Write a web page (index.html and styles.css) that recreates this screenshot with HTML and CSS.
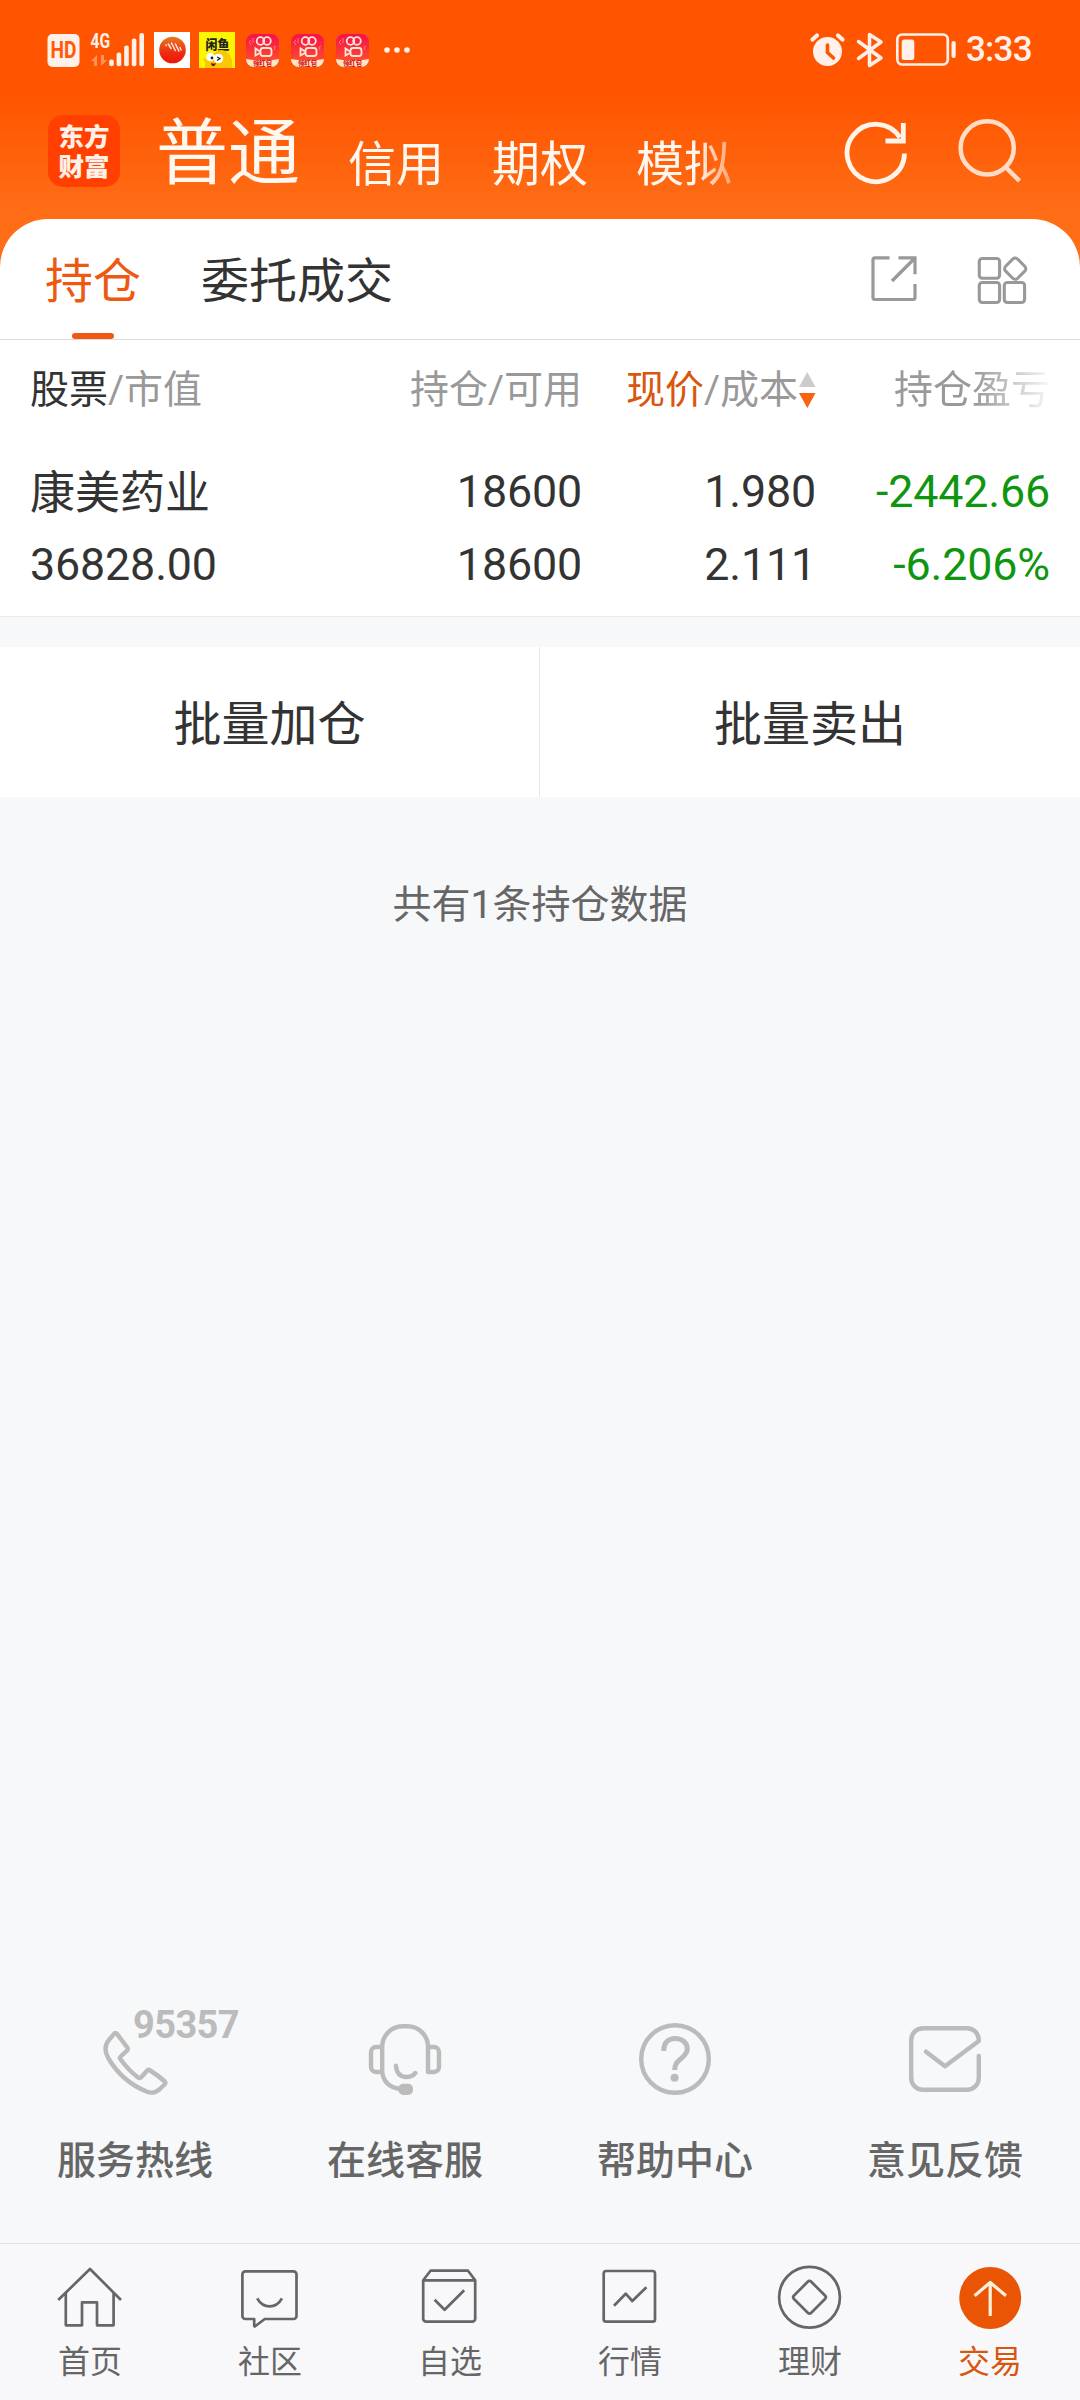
FILE: index.html
```html
<!DOCTYPE html>
<html lang="zh-CN">
<head>
<meta charset="utf-8">
<title>持仓</title>
<link rel="stylesheet" href="styles.css">
</head>
<body>
<div class="app">
  <header class="top">
    <div class="status">
      <div class="status-left">
        <svg class="sig" width="100" height="40" viewBox="46 30 100 40" fill="#fff1e9">
          <rect x="47.5" y="34" width="32" height="33" rx="5"/>
          <text class="hd" x="50.5" y="58.3" textLength="26" lengthAdjust="spacingAndGlyphs">HD</text>
          <text class="net" x="90.5" y="48" textLength="19.5" lengthAdjust="spacingAndGlyphs">4G</text>
          <g opacity=".4"><path d="M91 61l6-6v11h-3v-5zM101 55v11l6-6h-3v-5z"/></g>
          <rect x="109.2" y="59.5" width="4.6" height="6.8" rx="2"/>
          <rect x="116.6" y="52.5" width="4.6" height="13.8" rx="2"/>
          <rect x="124.2" y="45.5" width="4.6" height="20.8" rx="2"/>
          <rect x="131.8" y="38.5" width="4.6" height="27.8" rx="2"/>
          <rect x="139.4" y="33" width="4.6" height="33.3" rx="2"/>
        </svg>
        <svg class="app-a" width="36" height="36" viewBox="0 0 36 36">
          <defs><linearGradient id="ball" x1="0" y1="0" x2="0" y2="1"><stop offset="0" stop-color="#e87b20"/><stop offset=".6" stop-color="#ee2c10"/><stop offset="1" stop-color="#f01408"/></linearGradient></defs>
          <rect width="36" height="36" fill="#fff"/><circle cx="18.5" cy="18" r="13.3" fill="url(#ball)"/>
          <path d="M12 13l.3 .5M14.300 12l2.700 4.500M17.500 11l3.800 7.500M21.500 12l3.300 7M26 15.500l1 2.500" stroke="#ffe3dc" stroke-width="1.500" stroke-linecap="round"/>
        </svg>
        <svg class="app-b" width="36" height="36" viewBox="0 0 36 36">
          <rect width="36" height="36" fill="#fcf500"/>
          <text class="fish" x="6.500" y="16.500" textLength="24" lengthAdjust="spacingAndGlyphs">闲鱼</text>
          <path d="M6 36v-6l-2-3 2-1 2 3c0-5 4-9 8-8 3-4 9-4 13 0 4 4 5 10 4 15z" fill="#f9c800"/>
          <circle cx="11.500" cy="25" r="4.200" fill="#fff"/><circle cx="19.500" cy="26.500" r="4.800" fill="#fff"/>
          <circle cx="13" cy="26" r="1.400" fill="#222"/><path d="M18 25l3 1.500-3 2" stroke="#222" stroke-width="1.300" fill="none"/><path d="M12 31q3 1 5 0-1 4-3 3-2 0-2-3z" fill="#7a1500"/>
        </svg>
        <svg class="ks" width="33" height="33" viewBox="0 0 33 33">
          <defs>
            <linearGradient id="ksbg" x1="0" y1="0" x2="0" y2="1"><stop offset="0" stop-color="#f7104c"/><stop offset="1" stop-color="#ff5a22"/></linearGradient>
            <clipPath id="ksclip"><rect width="33" height="33" rx="8"/></clipPath>
            <g id="kuaishou" clip-path="url(#ksclip)">
              <rect width="33" height="33" fill="url(#ksbg)"/>
              <g fill="none" stroke="#ffe6da" stroke-width="1.800"><circle cx="14.500" cy="7" r="3.800"/><circle cx="21" cy="7" r="3.800"/><rect x="14.500" y="14" width="11" height="8" rx="2.500"/><path d="M14 17.500l-4.500-3v7l4.500-2.500"/></g>
              <g fill="none" stroke="#ff7a70" stroke-width="1"><path d="M5 6l-2 2 2 3M7 4v5M30 12l-2 1 1 3"/></g>
              <path d="M0 25q16.500 3 33 0v8H0z" fill="#ffe5c9"/>
              <text class="red" x="7" y="32" textLength="19" lengthAdjust="spacingAndGlyphs">领红包</text>
            </g>
          </defs>
          <use href="#kuaishou"/>
        </svg>
        <svg class="ks" width="33" height="33" viewBox="0 0 33 33"><use href="#kuaishou"/></svg>
        <svg class="ks" width="33" height="33" viewBox="0 0 33 33"><use href="#kuaishou"/></svg>
        <svg class="more" width="28" height="8" viewBox="0 0 28 8" fill="#fff1e9"><circle cx="4" cy="4" r="2.800"/><circle cx="14" cy="4" r="2.800"/><circle cx="24" cy="4" r="2.800"/></svg>
      </div>
      <div class="status-right">
        <svg width="150" height="40" viewBox="808 30 150 40" fill="none" stroke="#fff1e9">
          <circle cx="827.500" cy="51.500" r="14.500" fill="#fff1e9" stroke="none"/>
          <path d="M827.500 45v7.500l6 5.500" stroke="#ff5500" stroke-width="3.600" stroke-linecap="round" stroke-linejoin="round"/>
          <path d="M812.500 39.500l4.500-4M842.500 39.500l-4.500-4" stroke-width="4.200" stroke-linecap="round"/>
          <path d="M858.500 41.500l22.500 16.500-11.500 7.500v-31l11.500 7.500-22.500 16.500" stroke-width="3.500" stroke-linecap="round" stroke-linejoin="round"/>
          <rect x="897.300" y="34.500" width="50.500" height="30" rx="5" stroke-width="2.700"/>
          <rect x="901.700" y="39.500" width="12.600" height="20.500" rx="2.500" fill="#fff1e9" stroke="none"/>
          <rect x="951.500" y="41" width="4.200" height="17" rx="2" fill="#fff1e9" stroke="none"/>
        </svg>
        <span class="clock">3:33</span>
      </div>
    </div>
    <div class="head">
      <div class="logo">东方<br>财富</div>
      <nav class="accounts"><span class="on">普通</span><span>信用</span><span>期权</span><span>模拟</span></nav>
      <svg class="refresh" width="64" height="66" viewBox="844 119 64 66" fill="none" stroke="#fff3ea" stroke-width="4.800"><path d="M904.500 153.500A28.700 28.700 0 1 1 900 137.500"/><path d="M885.500 141H903.300V123"/></svg>
      <svg class="search" width="66" height="66" viewBox="956 117 66 66" fill="none" stroke="#ffdcc6" stroke-width="4.500"><circle cx="987.200" cy="147.900" r="26.600"/><path d="M1005.500 167l14 14"/></svg>
    </div>
  </header>

  <main class="card">
    <div class="tabs">
      <span class="tab active">持仓</span><span class="tab">委托成交</span>
      <svg class="t1" width="48" height="48" viewBox="870 255 48 48" fill="none" stroke="#999" stroke-width="3.200"><path d="M889.500 257.800H875a2 2 0 0 0-2 2v37.700a2 2 0 0 0 2 2h38a2 2 0 0 0 2-2V284"/><path d="M898.500 257.800H915v16.500M914.500 258.500l-22.500 22.500"/></svg>
      <svg class="t2" width="52" height="52" viewBox="976 255 52 52" fill="none" stroke="#999" stroke-width="3.100"><rect x="979.300" y="258.500" width="20.300" height="19.800" rx="3"/><rect x="979.300" y="282.500" width="20.300" height="20" rx="3"/><rect x="1004.300" y="282.500" width="20.300" height="20" rx="3"/><rect x="1006.700" y="260.200" width="17" height="17" rx="3.500" transform="rotate(45 1015.200 268.700)"/></svg>
    </div>
    <div class="grid labels">
      <span><b>股票</b>/市值</span>
      <span>持仓/可用</span>
      <span class="sorted"><em>现价</em>/成本<svg width="17" height="36" viewBox="0 0 17 36"><path d="M8.300 0L16.500 15H0z" fill="#ccc"/><path d="M8.300 36L16.500 21H0z" fill="#f9620f"/></svg></span>
      <span class="fade">持仓盈亏</span>
    </div>
    <div class="grid row first"><span class="name">康美药业</span><span>18600</span><span>1.980</span><span class="down">-2442.66</span></div>
    <div class="grid row second"><span>36828.00</span><span>18600</span><span>2.111</span><span class="down">-6.206%</span></div>
  </main>

  <div class="actions"><div>批量加仓</div><div>批量卖出</div></div>
  <p class="count">共有1条持仓数据</p>

  <section class="services">
    <div class="service">
      <svg width="72" height="72" viewBox="0 0 72 72"><path d="M14.800 11.200q1.700-2.500 3.400 0L28.300 24.500q1.200 1.700-.3 3.200l-6.300 5.800q-1.400 1.300-.2 2.700 8 11 17.500 18.200 1.800 1.500 3.200-.2l5.800-6.500q1.400-1.600 3.200-.2 7.500 4.600 14.600 11 1.400 1.300 0 2.700l-5.500 5.300q-5.600 4.800-12.200 2.200Q23.500 59 9.500 35.500 3.500 25.500 9.500 17.500z"/></svg>
      <i class="hotline">95357</i><span>服务热线</span>
    </div>
    <div class="service">
      <svg width="72" height="72" viewBox="0 0 72 72"><path d="M13.200 48V24A20.500 20.500 0 0 1 33.500 3.300h5A20.500 20.500 0 0 1 59 24v25h6a5 5 0 0 0 5-5V29a5 5 0 0 0-5-5h-6M13.200 24H7a5 5 0 0 0-5 5v15a5 5 0 0 0 5 5h6.200q2 15 17.500 16.700M27 42.700q.8 11.300 10.500 11.300 5.500 0 8.800-4"/><rect x="29.400" y="60.700" width="14.600" height="11.200" rx="5" fill="#bbb" stroke="none"/></svg>
      <span>在线客服</span>
    </div>
    <div class="service">
      <svg width="72" height="72" viewBox="0 0 72 72"><circle cx="36" cy="36" r="33.800"/><path class="butt" d="M24.800 28v-1c0-7 4.500-11.600 11.400-11.600S48.300 20 48.300 26c0 9-12.700 9.500-12.700 21"/><circle cx="35.600" cy="54.700" r="4" fill="#bbb" stroke="none"/></svg>
      <span>帮助中心</span>
    </div>
    <div class="service">
      <svg width="72" height="72" viewBox="0 0 72 72"><path d="M69.800 33v22a11.800 11.800 0 0 1-11.800 11.800H14A11.800 11.800 0 0 1 2.200 55V17A11.800 11.800 0 0 1 14 5.200h44A11.800 11.800 0 0 1 69.800 17v1L36 43.200 17 28.700"/></svg>
      <span>意见反馈</span>
    </div>
  </section>

  <footer class="nav">
    <div class="item"><svg width="72" height="72" viewBox="0 0 72 72"><path d="M4.200 38L36 7l31 31M11.800 31v32q0 .3 .3 .3H28V40.300h15v23h16.300q.3 0 .3-.3V31"/></svg><span>首页</span></div>
    <div class="item"><svg width="72" height="72" viewBox="0 0 72 72"><path d="M20.200 57H11.400a3 3 0 0 1-3-3V12.300a3 3 0 0 1 3-3h48.100a3 3 0 0 1 3 3V54a3 3 0 0 1-3 3H30.800l-10 7.500-.6-.6zM23.200 36.300q4.500 8 12.400 8t12.400-8"/></svg><span>社区</span></div>
    <div class="item"><svg width="72" height="72" viewBox="0 0 72 72"><path d="M9.200 18.300L16.500 8.700H54l7.200 9.600v38.400a3 3 0 0 1-3 3h-46a3 3 0 0 1-3-3zH61M20.600 37.700l10 10 19.600-19.400"/></svg><span>自选</span></div>
    <div class="item"><svg width="72" height="72" viewBox="0 0 72 72"><rect x="9.700" y="9" width="51.300" height="50.700" rx="2.500"/><path d="M20 43.700l11.700-12 6.600 7.300 14.100-13.700"/></svg><span>行情</span></div>
    <div class="item"><svg width="72" height="72" viewBox="0 0 72 72"><circle cx="35.500" cy="35.300" r="30.400"/><rect x="23.300" y="23.100" width="24.400" height="24.400" rx="2.500" transform="rotate(45 35.500 35.300)"/></svg><span>理财</span></div>
    <div class="item current"><svg width="72" height="72" viewBox="0 0 72 72"><circle cx="36.200" cy="36" r="31" fill="#e95504" stroke="none"/><path d="M20.600 33.700L36.200 20.500 52 33.700M36.200 20.500V54" stroke="#fff1dc" stroke-width="3.200"/></svg><span>交易</span></div>
  </footer>
</div>
</body>
</html>
```
FILE: styles.css
```css
* { box-sizing: border-box; }
body {
  margin: 0;
  background: #f7f8fa;
  color: #333;
  font-family: Roboto, "Noto Sans CJK SC", sans-serif;
}
svg { display: block; flex: none; }
.app { display: flex; flex-direction: column; width: 1080px; height: 2400px; }

/* header */
.top {
  flex: none;
  height: 267px;
  background: linear-gradient(#ff5500 0, #ff5500 98px, #ff6d17 212px, #ff6d17);
}
.status { display: flex; justify-content: space-between; height: 100px; padding: 30px 46px 0; }
.status-left, .status-right { display: flex; align-items: center; height: 40px; }
.hd { font: 700 24px Roboto, sans-serif; fill: #ff5a08; }
.net { font: 700 21px Roboto, sans-serif; }
.fish { font: 900 13px "Noto Sans CJK SC", sans-serif; fill: #222; }
.red { font: 900 7px "Noto Sans CJK SC", sans-serif; fill: #d5221c; }
.app-a { margin-left: 8px; }
.app-b { margin-left: 9px; }
.ks { margin-left: 12px; }
.app-b + .ks { margin-left: 11px; }
.more { margin-left: 14px; }
.clock { margin-left: 8px; color: #fff1e9; font-size: 35px; font-weight: 500; line-height: 42px; letter-spacing: -.7px; }
.status-right { margin-right: 2px; }

.head { display: flex; align-items: flex-start; height: 119px; padding-left: 48px; }
.logo {
  width: 72px; height: 72px; margin-top: 15px; padding-top: 5px;
  border-radius: 15px; background: #ff4000; color: #fff1e8; text-align: center;
  font: 900 25.5px/30px "Noto Sans CJK SC", sans-serif;
}
.accounts {
  display: flex; gap: 48px;
  width: 578px; height: 119px; margin-left: 36px;
  color: #fff8f0; font-size: 48px; line-height: 129px; white-space: nowrap;
  -webkit-mask-image: linear-gradient(90deg, #000 540px, rgba(0,0,0,.4) 578px);
  mask-image: linear-gradient(90deg, #000 540px, rgba(0,0,0,.4) 578px);
}
.accounts .on { font-size: 72px; line-height: 108px; }
.refresh { margin: 19px 0 0 110px; }
.search { margin: 17px 0 0 48px; }

/* holdings card */
.card {
  flex: none; height: 398px; margin-top: -48px;
  background: #fff; border-radius: 48px 48px 0 0; border-bottom: 1px solid #e9e9e9;
}
.tabs { display: flex; height: 121px; padding-left: 45px; border-bottom: 1px solid #ddd; font-size: 48px; line-height: 125px; }
.tab { position: relative; height: 120px; }
.tab + .tab { margin-left: 60px; }
.active { color: #ec5a12; }
.active::after {
  content: ""; position: absolute; left: 27px; bottom: 0;
  width: 42px; height: 6px; border-radius: 3px; background: #ef5a10;
}
.t1 { margin: 36px 0 0 auto; }
.t2 { margin: 36px 52px 0 58px; }

.grid { display: grid; grid-template-columns: 170px 382px 234px 234px; padding-left: 30px; white-space: nowrap; }
.grid > span + span { text-align: right; }
.labels { height: 108px; color: #999; font-size: 39px; line-height: 101px; }
.labels b, .labels em { font-weight: 400; font-style: normal; color: #333; }
.labels em { color: #d9560e; }
.sorted { display: flex; justify-content: flex-end; }
.sorted svg { margin: 32px 0 0 1px; }
.fade {
  -webkit-mask-image: linear-gradient(90deg, #000 158px, rgba(0,0,0,.12) 230px);
  mask-image: linear-gradient(90deg, #000 158px, rgba(0,0,0,.12) 230px);
}
.row { height: 73px; font-size: 44.8px; line-height: 87px; letter-spacing: -.15px; }
.name { font-size: 45px; line-height: 91px; letter-spacing: 0; }
.down { color: #0f960f; }

.actions { display: flex; flex: none; height: 150px; margin-top: 30px; background: #fff; font-size: 48px; line-height: 156px; text-align: center; }
.actions div { width: 540px; border-right: 1px solid #e9e9e9; }
.actions div + div { border-right: 0; }
.count { margin: 78px 0 0; color: #666; font-size: 39px; line-height: 60px; text-align: center; }

/* service shortcuts */
.services { display: flex; flex: none; margin-top: auto; height: 220px; }
.service { position: relative; display: flex; flex: 1; flex-direction: column; align-items: center; color: #666; font-size: 39px; font-weight: 500; line-height: 60px; }
.service svg { fill: none; stroke: #bbb; stroke-width: 4.4; stroke-linecap: round; stroke-linejoin: round; overflow: visible; }
.service .butt { stroke-linecap: butt; stroke-width: 5; }
.service span { margin-top: 36px; }
.hotline { position: absolute; left: 133px; top: -20px; color: #bbb; font: 700 38px/44px Roboto, sans-serif; letter-spacing: -.6px; }

/* bottom navigation */
.nav { display: flex; flex: none; height: 157px; padding-top: 18px; border-top: 1px solid #e2e2e4; background: #f8f8fa; color: #666; }
.item { display: flex; flex: 1; flex-direction: column; align-items: center; font-size: 32px; line-height: 48px; }
.item svg { fill: none; stroke: #666; stroke-width: 2.7; stroke-linejoin: round; }
.item span { margin-top: 4px; }
.current { color: #d9560e; }
```
